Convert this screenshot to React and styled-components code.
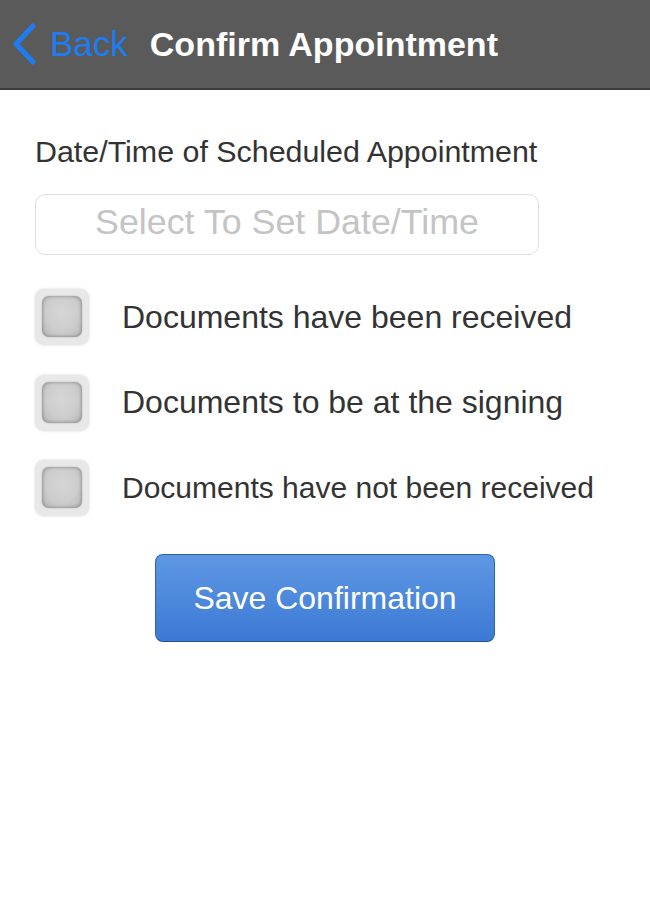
import React, { useState } from "react"
import styled, { createGlobalStyle } from "styled-components"

const GlobalStyle = createGlobalStyle`
  body {
    margin: 0;
    background: #ffffff;
    font-family: "Liberation Sans", Arial, sans-serif;
  }
`

const Page = styled.div`
  width: 650px;
  min-height: 900px;
  background: #ffffff;
`

const NavBar = styled.header`
  height: 90px;
  background: #5a5a5a;
  border-bottom: 2px solid #3c3c3c;
  display: flex;
  align-items: center;
  padding: 0 0 0 11px;
  box-sizing: border-box;
`

const BackButton = styled.button`
  display: flex;
  align-items: center;
  gap: 13px;
  background: none;
  border: none;
  padding: 0;
  color: #1d7cf2;
  font-family: inherit;
  font-size: 35px;
  cursor: pointer;
`

const Title = styled.h1`
  margin: 0 0 0 22px;
  color: #ffffff;
  font-size: 34px;
  font-weight: 700;
`

const Content = styled.main`
  padding: 44px 20px 0 35px;
  display: flex;
  flex-direction: column;
  align-items: flex-start;
`

const Label = styled.div`
  font-size: 30.4px;
  line-height: 34px;
  color: #333333;
`

const DateField = styled.button`
  margin-top: 26px;
  width: 504px;
  height: 61px;
  border: 1.5px solid #dddddd;
  border-radius: 10px;
  background: #ffffff;
  color: #c4c4c4;
  font-family: inherit;
  font-size: 35.8px;
  text-align: center;
  cursor: pointer;
  padding: 0 0 4px 0;
`

const OptionList = styled.div`
  margin-top: 34px;
  display: flex;
  flex-direction: column;
  gap: 29.5px;
`

const OptionRow = styled.label`
  display: flex;
  align-items: center;
  gap: 33px;
  cursor: pointer;
`

const Box = styled.span`
  width: 54px;
  height: 56px;
  flex: none;
  box-sizing: border-box;
  border-radius: 9px;
  background: #e8e8e8;
  box-shadow: 0 0 2px 1px #ececec;
  display: flex;
  align-items: center;
  justify-content: center;
  padding: 7px 7px 8px 7px;

  &::after {
    content: "";
    width: 100%;
    height: 100%;
    border-radius: 7px;
    background: ${props =>
      props.checked
        ? "linear-gradient(#6ea3e6, #3a78d4)"
        : "radial-gradient(ellipse at 50% 42%, #d6d6d6 0%, #cdcdcd 55%, #b4b4b4 100%)"};
    box-shadow: inset 0 0 3px 1px rgba(0, 0, 0, 0.22),
      0 0 1.5px rgba(0, 0, 0, 0.3);
  }
`

const OptionText = styled.span`
  font-size: ${props => props.size}px;
  color: #333333;
  white-space: nowrap;
`

const SaveButton = styled.button`
  align-self: flex-start;
  margin: 38px 0 0 120px;
  width: 340px;
  height: 88px;
  border: 1.5px solid #2c62b6;
  border-bottom-color: #244f96;
  border-radius: 8px;
  background: linear-gradient(#5e98e3, #3c79d5);
  color: #ffffff;
  font-family: inherit;
  font-size: 32px;
  cursor: pointer;
`

// the last label is shrunk to fit the row, as in the app
const options = [
  { text: "Documents have been received", size: 32 },
  { text: "Documents to be at the signing", size: 32 },
  { text: "Documents have not been received", size: 30 },
]

const App = () => {
  const [checked, setChecked] = useState(null)

  return (
    <Page>
      <GlobalStyle />
      <NavBar>
        <BackButton>
          <svg width="26" height="42" viewBox="0 0 26 42">
            <path
              d="M22 3 L5 21 L22 39"
              fill="none"
              stroke="#1d7cf2"
              strokeWidth="5"
              strokeLinecap="round"
              strokeLinejoin="round"
            />
          </svg>
          Back
        </BackButton>
        <Title>Confirm Appointment</Title>
      </NavBar>
      <Content>
        <Label>Date/Time of Scheduled Appointment</Label>
        <DateField>Select To Set Date/Time</DateField>
        <OptionList>
          {options.map((option, i) => (
            <OptionRow key={option.text} onClick={() => setChecked(i)}>
              <Box checked={checked === i} />
              <OptionText size={option.size}>{option.text}</OptionText>
            </OptionRow>
          ))}
        </OptionList>
        <SaveButton>Save Confirmation</SaveButton>
      </Content>
    </Page>
  )
}

export default App
